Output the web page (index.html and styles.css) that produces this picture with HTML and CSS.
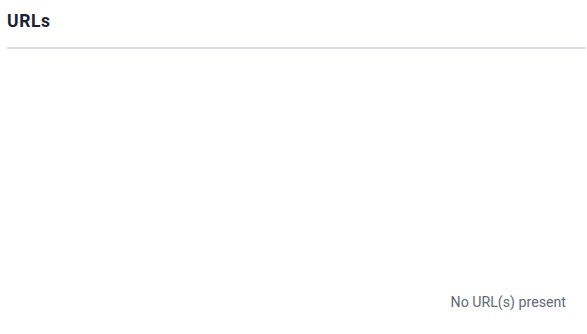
FILE: index.html
```html
<!DOCTYPE html>
<html>
<head>
    <meta charset="utf-8"/>
    <title>URLs</title>
    <link rel="stylesheet" href="styles.css">
</head>
<body>
<div class="panel">
    <header class="panel-header">
        <h3>URLs</h3>
    </header>
    <div class="panel-body">
        <span class="empty">No URL(s) present</span>
    </div>
</div>
</body>
</html>
```

FILE: styles.css
```css
body {
    margin: 0;
    background: #ffffff;
    font-family: Roboto, "Noto Sans", sans-serif;
}

.panel {
    height: 334px;
    padding: 0 1px 0 7px;
    box-sizing: border-box;
    display: flex;
    flex-direction: column;
}

.panel-header {
    height: 47px;
    border-bottom: 2px solid #dcdde3;
    display: flex;
    align-items: center;
}

.panel-header h3 {
    margin: 0 0 5px 0;
    font-size: 17.5px;
    font-weight: 700;
    color: #1b2233;
    letter-spacing: 0.6px;
}

.panel-body {
    flex: 1;
    display: flex;
    justify-content: flex-end;
    align-items: flex-end;
    padding: 0 20px 24px 0;
}

.empty {
    font-size: 14.2px;
    color: #5d6b7a;
}
```
